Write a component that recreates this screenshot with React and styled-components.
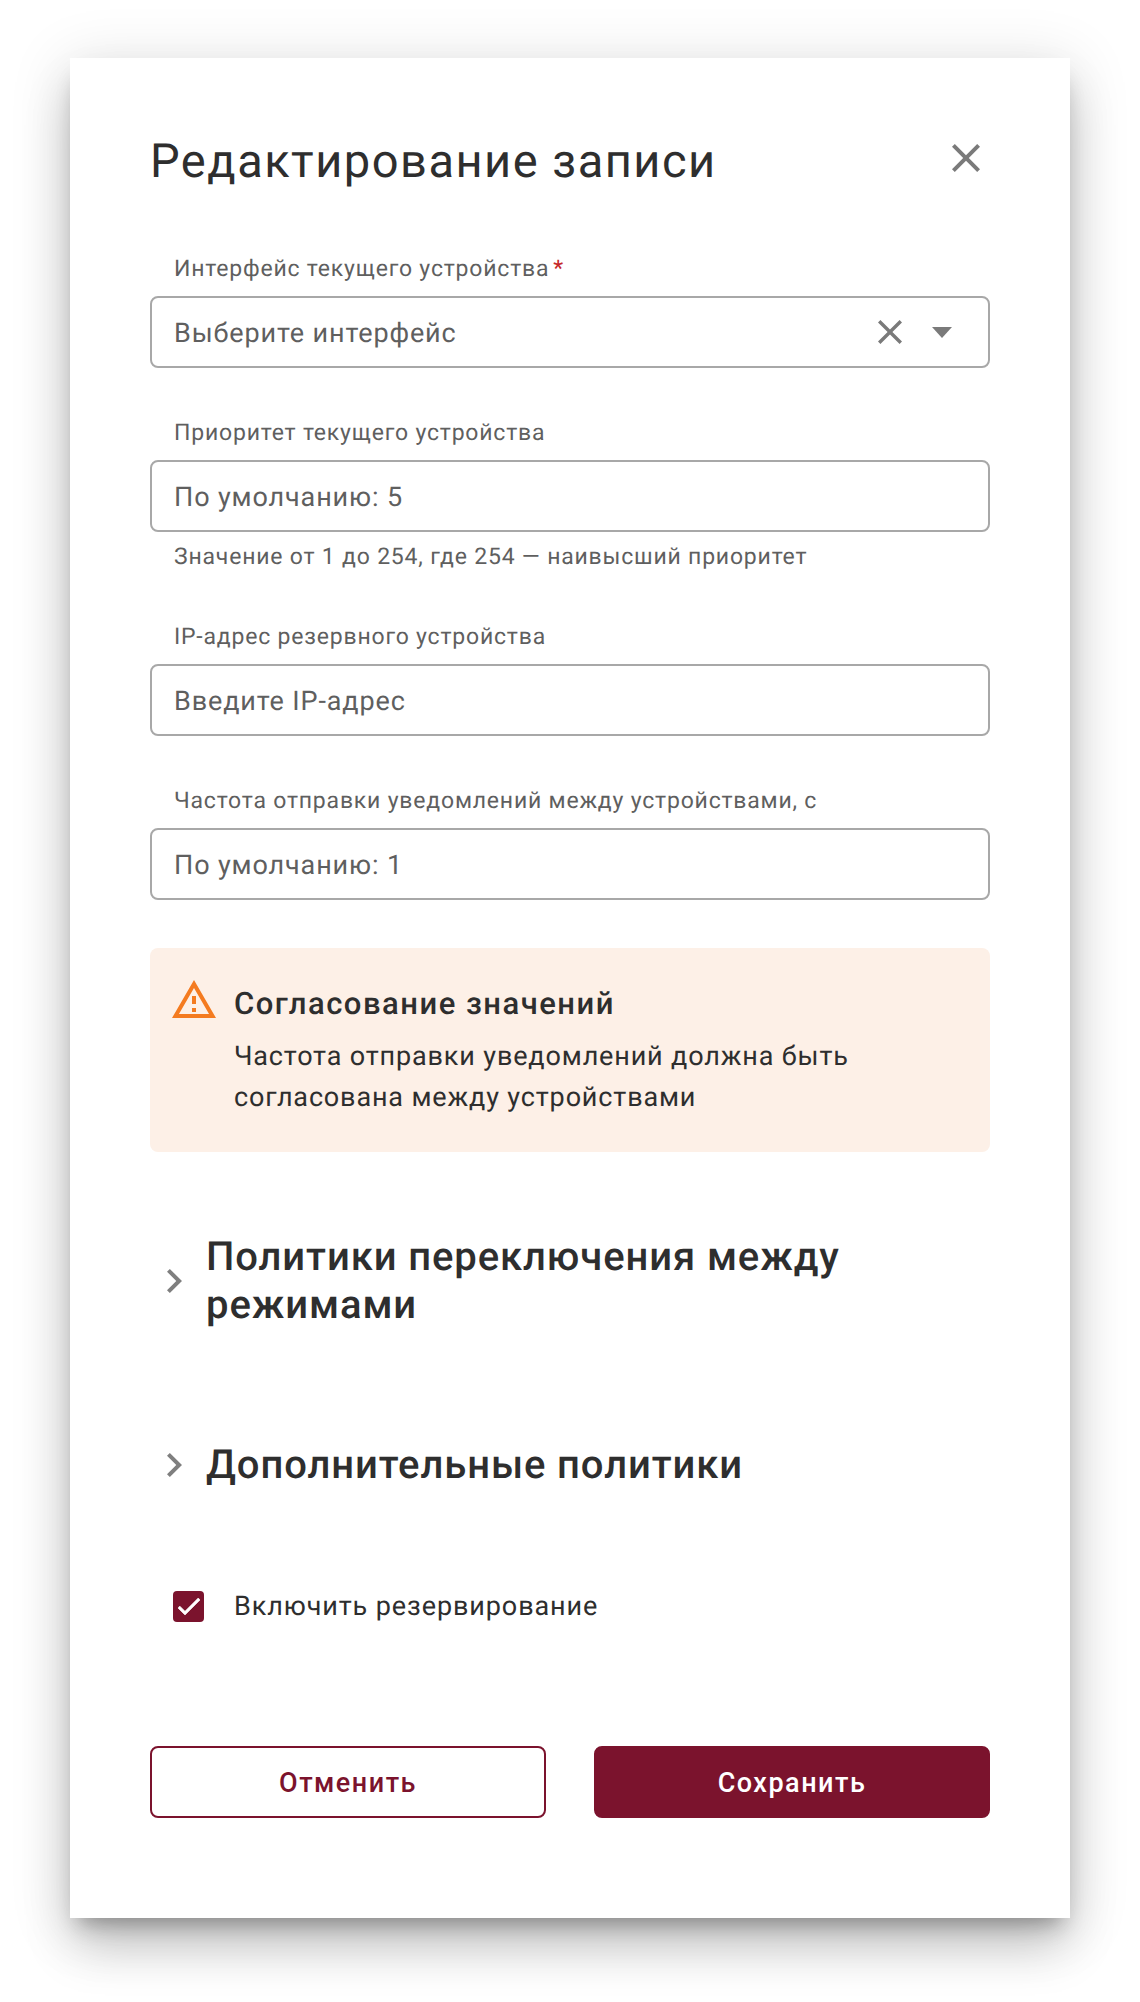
import React from 'react';
import styled, { createGlobalStyle } from 'styled-components';

const Global = createGlobalStyle`
  html, body { margin: 0; padding: 0; background: #fff; }
  body {
    font-family: Roboto, "Liberation Sans", sans-serif;
    color: #2e2e2e;
    text-rendering: geometricPrecision;
  }
  * { box-sizing: border-box; }
`;

const Page = styled.div`
  width: 1140px;
  height: 2002px;
  padding: 58px 70px 0;
  overflow: hidden;
`;

const Modal = styled.section`
  width: 1000px;
  height: 1860px;
  padding: 71px 80px 100px;
  background: #fff;
  box-shadow:
    0 14px 20px -9px rgba(0, 0, 0, 0.3),
    0 32px 48px -4px rgba(0, 0, 0, 0.2),
    0 8px 56px 4px rgba(0, 0, 0, 0.12);
`;

const Header = styled.header`
  display: flex;
  justify-content: space-between;
  align-items: flex-start;
  height: 66px;
  margin-bottom: 57px;
`;

const Title = styled.h1`
  margin: 0;
  font-size: 47px;
  line-height: 66px;
  font-weight: 400;
  letter-spacing: 1.5px;
  color: #2e2e2e;
`;

const CloseButton = styled.button`
  display: flex;
  border: 0;
  padding: 0;
  margin: 15px 10px 0 0;
  background: none;
  color: #7a7a7a;
`;

const Field = styled.div`
  margin-bottom: 48px;
`;

const Label = styled.label`
  display: block;
  height: 32px;
  margin-bottom: 12px;
  padding-left: 24px;
  font-size: 23px;
  line-height: 34px;
  letter-spacing: 0.8px;
  color: #5f5f5f;
`;

const Required = styled.span`
  color: #c62828;
  margin-left: 4px;
`;

const InputBox = styled.div`
  display: flex;
  align-items: center;
  height: 72px;
  padding: 0 22px;
  border: 2px solid #a8a8a8;
  border-radius: 8px;
  font-size: 27px;
  letter-spacing: 0.87px;
  color: #5f5f5f;
`;

const Placeholder = styled.span`
  flex: 1;
  padding-top: 2px;
`;

const ClearIcon = styled.svg`
  display: block;
  color: #7a7a7a;
  margin-right: 30px;
`;

const Caret = styled.svg`
  display: block;
  color: #7a7a7a;
  margin-right: 14px;
`;

const Hint = styled.div`
  margin-top: 8px;
  padding-left: 24px;
  height: 32px;
  font-size: 23px;
  line-height: 34px;
  letter-spacing: 0.8px;
  color: #5f5f5f;
`;

const Alert = styled.aside`
  display: flex;
  gap: 18px;
  height: 204px;
  margin-bottom: 81px;
  padding: 34px 22px;
  background: #fdf0e7;
  border-radius: 8px;
`;

const AlertIcon = styled.svg`
  flex: none;
  display: block;
  margin-top: -2px;
  color: #f47b20;
`;

const AlertBody = styled.div`
  display: flex;
  flex-direction: column;
`;

const AlertTitle = styled.div`
  font-size: 31px;
  line-height: 44px;
  font-weight: 500;
  letter-spacing: 1.5px;
  margin-bottom: 10px;
`;

const AlertText = styled.div`
  font-size: 27px;
  line-height: 41px;
  letter-spacing: 0.85px;
`;

const Accordion = styled.div`
  display: flex;
  align-items: center;
  gap: 24px;
  margin-bottom: ${p => p.$gap}px;
  padding-left: 17px;
`;

const Chevron = styled.svg`
  flex: none;
  display: block;
  color: #7f7f7f;
`;

const AccordionTitle = styled.h2`
  margin: 0;
  font-size: 40px;
  line-height: 48px;
  font-weight: 500;
  letter-spacing: 0.9px;
  color: #2e2e2e;
`;

const CheckRow = styled.div`
  display: flex;
  align-items: center;
  gap: 30px;
  padding-left: 23px;
  height: 40px;
  margin-bottom: 120px;
`;

const CheckBox = styled.span`
  display: flex;
  align-items: center;
  justify-content: center;
  width: 31px;
  height: 31px;
  background: #7b132d;
  border-radius: 4px;
  color: #fff;
`;

const CheckLabel = styled.span`
  font-size: 27px;
  letter-spacing: 0.9px;
`;

const Actions = styled.div`
  display: grid;
  grid-template-columns: 1fr 1fr;
  gap: 48px;
`;

const Button = styled.button`
  height: 72px;
  padding: 2px 0 0;
  border: 2px solid #7b132d;
  border-radius: 8px;
  background: ${p => (p.$primary ? '#7b132d' : '#fff')};
  color: ${p => (p.$primary ? '#fff' : '#7b132d')};
  font-family: inherit;
  font-size: 27px;
  font-weight: 500;
  letter-spacing: 1.5px;
`;

const CROSS = 'M19 6.41L17.59 5 12 10.59 6.41 5 5 6.41 10.59 12 5 17.59 6.41 19 12 13.41 17.59 19 19 17.59 13.41 12z';

const ChevronIcon = () => (
  <Chevron width="15" height="24" viewBox="8.59 6 7.41 12" preserveAspectRatio="none">
    <path fill="currentColor" d="M10 6L8.59 7.41 13.17 12l-4.58 4.59L10 18l6-6z" />
  </Chevron>
);

export default function App() {
  return (
    <Page>
      <Global />
      <Modal>
        <Header>
          <Title>Редактирование записи</Title>
          <CloseButton aria-label="Закрыть">
            <svg width="28" height="28" viewBox="5 5 14 14">
              <path fill="currentColor" d={CROSS} />
            </svg>
          </CloseButton>
        </Header>

        <Field>
          <Label>Интерфейс текущего устройства<Required>*</Required></Label>
          <InputBox>
            <Placeholder>Выберите интерфейс</Placeholder>
            <ClearIcon width="24" height="24" viewBox="5 5 14 14">
              <path fill="currentColor" d={CROSS} />
            </ClearIcon>
            <Caret width="20" height="11" viewBox="0 0 20 11">
              <path fill="currentColor" d="M0 0h20L10 11z" />
            </Caret>
          </InputBox>
        </Field>

        <Field>
          <Label>Приоритет текущего устройства</Label>
          <InputBox><Placeholder>По умолчанию: 5</Placeholder></InputBox>
          <Hint>Значение от 1 до 254, где 254 — наивысший приоритет</Hint>
        </Field>

        <Field>
          <Label>IP-адрес резервного устройства</Label>
          <InputBox><Placeholder>Введите IP-адрес</Placeholder></InputBox>
        </Field>

        <Field>
          <Label>Частота отправки уведомлений между устройствами, с</Label>
          <InputBox><Placeholder>По умолчанию: 1</Placeholder></InputBox>
        </Field>

        <Alert>
          <AlertIcon width="44" height="38" viewBox="1 2 22 19">
            <path fill="currentColor" d="M12 5.99L19.53 19H4.47L12 5.99M12 2L1 21h22L12 2zm1 14h-2v2h2v-2zm0-6h-2v4h2v-4z" />
          </AlertIcon>
          <AlertBody>
            <AlertTitle>Согласование значений</AlertTitle>
            <AlertText>
              Частота отправки уведомлений должна быть<br />
              согласована между устройствами
            </AlertText>
          </AlertBody>
        </Alert>

        <Accordion $gap={112}>
          <ChevronIcon />
          <AccordionTitle>Политики переключения между<br />режимами</AccordionTitle>
        </Accordion>

        <Accordion $gap={97}>
          <ChevronIcon />
          <AccordionTitle>Дополнительные политики</AccordionTitle>
        </Accordion>

        <CheckRow>
          <CheckBox>
            <svg width="22" height="17" viewBox="3.41 5.59 17.59 13.41">
              <path fill="currentColor" stroke="currentColor" strokeWidth="0.6" d="M9 16.17L4.83 12l-1.42 1.41L9 19 21 7l-1.41-1.41z" />
            </svg>
          </CheckBox>
          <CheckLabel>Включить резервирование</CheckLabel>
        </CheckRow>

        <Actions>
          <Button>Отменить</Button>
          <Button $primary>Сохранить</Button>
        </Actions>
      </Modal>
    </Page>
  );
}
